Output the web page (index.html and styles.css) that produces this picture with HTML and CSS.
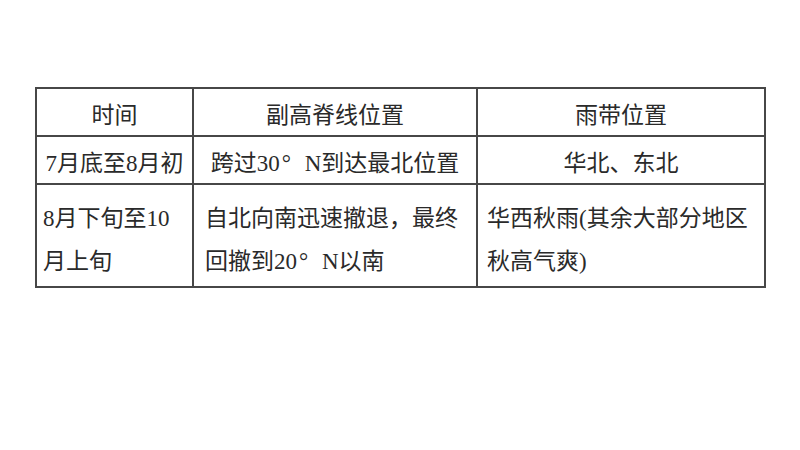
FILE: index.html
```html
<!DOCTYPE html>
<html lang="zh-CN">
<head>
<meta charset="utf-8">
<link rel="stylesheet" href="styles.css">
</head>
<body>
<div class="page">
  <table class="grid">
    <colgroup>
      <col class="c1"><col class="c2"><col class="c3">
    </colgroup>
    <tr class="r-head">
      <td class="center">时间</td>
      <td class="center">副高脊线位置</td>
      <td class="center">雨带位置</td>
    </tr>
    <tr class="r-mid">
      <td class="center">7月底至8月初</td>
      <td class="center">跨过30<span class="deg">°</span>N到达最北位置</td>
      <td class="center">华北、东北</td>
    </tr>
    <tr class="r-tall">
      <td class="left p1">8月下旬至10<br>月上旬</td>
      <td class="left p2">自北向南迅速撤退，最终<br>回撤到20<span class="deg">°</span>N以南</td>
      <td class="left p3">华西秋雨(其余大部分地区<br>秋高气爽)</td>
    </tr>
  </table>
</div>
</body>
</html>
```
FILE: styles.css
```css
html, body {
  margin: 0;
  padding: 0;
  background: #ffffff;
}
.page {
  width: 800px;
  height: 450px;
  padding: 87px 0 0 35px;
  box-sizing: border-box;
}
.grid {
  border-collapse: collapse;
  table-layout: fixed;
  width: 729px;
  font-family: "Liberation Serif", "Noto Sans CJK SC", serif;
  font-size: 23px;
  color: #2a2a2a;
}
.c1 { width: 157px; }
.c2 { width: 284px; }
.c3 { width: 288px; }
.grid td {
  border: 2px solid #474747;
  padding: 0;
  vertical-align: middle;
  white-space: nowrap;
}
.grid .r-head td, .grid .r-mid td {
  height: 48px;
  padding-top: 8px;
  box-sizing: border-box;
  line-height: 30px;
}
.grid .r-tall td {
  height: 103px;
  box-sizing: border-box;
  line-height: 43px;
  padding-top: 9px;
}
.grid .center { text-align: center; }
.grid .left { text-align: left; }
.grid .r-tall .p1 { padding-left: 6px; }
.grid .r-tall .p2 { padding-left: 11px; }
.grid .r-tall .p3 { padding-left: 9px; }
.deg {
  display: inline-block;
  width: 25px;
  text-align: left;
  padding-left: 2px;
  box-sizing: border-box;
}
```
